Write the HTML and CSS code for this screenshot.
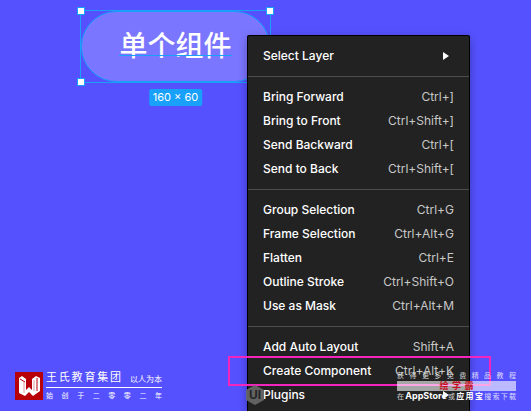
FILE: index.html
```html
<!DOCTYPE html>
<html lang="zh-CN">
<head>
    <meta charset="UTF-8">
    <meta name="viewport" content="width=device-width, initial-scale=1.0">
    <title>Create Component</title>
    <link rel="stylesheet" href="styles.css">
</head>
<body>
    <main class="canvas">
        <div class="selection">
            <div class="pill"><span class="pill-text">单个组件</span></div>
            <i class="handle top-left"></i>
            <i class="handle top-right"></i>
            <i class="handle bottom-left"></i>
            <span class="size-badge">160 × 60</span>
        </div>

        <nav class="menu" lang="en">
            <ul class="menu-group">
                <li><button type="button">Select Layer <svg class="arrow" viewBox="0 0 6 8"><path d="M0 0L6 4L0 8Z"/></svg></button></li>
            </ul>
            <ul class="menu-group">
                <li><button type="button">Bring Forward <kbd>Ctrl+]</kbd></button></li>
                <li><button type="button">Bring to Front <kbd>Ctrl+Shift+]</kbd></button></li>
                <li><button type="button">Send Backward <kbd>Ctrl+[</kbd></button></li>
                <li><button type="button">Send to Back <kbd>Ctrl+Shift+[</kbd></button></li>
            </ul>
            <ul class="menu-group">
                <li><button type="button">Group Selection <kbd>Ctrl+G</kbd></button></li>
                <li><button type="button">Frame Selection <kbd>Ctrl+Alt+G</kbd></button></li>
                <li><button type="button">Flatten <kbd>Ctrl+E</kbd></button></li>
                <li><button type="button">Outline Stroke <kbd>Ctrl+Shift+O</kbd></button></li>
                <li><button type="button">Use as Mask <kbd>Ctrl+Alt+M</kbd></button></li>
            </ul>
            <ul class="menu-group">
                <li><button type="button">Add Auto Layout <kbd>Shift+A</kbd></button></li>
                <li class="marked"><button type="button">Create Component <kbd>Ctrl+Alt+K</kbd></button></li>
                <li><button type="button">Plugins <svg class="arrow" viewBox="0 0 6 8"><path d="M0 0L6 4L0 8Z"/></svg></button></li>
            </ul>
        </nav>

        <svg class="hex" viewBox="0 0 20 20">
            <path d="M10 0L19 5V15L10 20L1 15V5Z" fill="#6a6a6a"/>
            <text x="10" y="14" text-anchor="middle">UI</text>
        </svg>

        <div class="brand">
            <svg class="brand-logo" viewBox="0 0 28 28">
                <rect width="28" height="28" fill="#b80009"/>
                <path d="M4 6L7 4L11 7V18L14 15L17 18V7L21 4L25 6V19L18 24L14 20L10 24L4 21Z" fill="#fff"/>
                <path d="M5 7L10 10M22 6V19" fill="none" stroke="#b80009" stroke-width="1"/>
                <path d="M9 10V21M19 8V19" fill="none" stroke="#e09a9d" stroke-width="1"/>
            </svg>
            <div class="brand-text">
                <div class="brand-top">
                    <span class="brand-name">王氏教育集团</span>
                    <span class="brand-motto">以人为本</span>
                </div>
                <div class="brand-since">始创于二零零二年</div>
            </div>
        </div>

        <div class="promo">
            <div class="promo-line">获得更多免费精品教程</div>
            <div class="promo-bar"><span>绘学霸</span></div>
            <div class="promo-line promo-stores">在<b class="app-store">AppStore</b>或<b>应用宝</b>搜索下载</div>
        </div>
    </main>
</body>
</html>
```

FILE: styles.css
```css
* {
    box-sizing: border-box;
}

body {
    margin: 0;
    font-family: Inter, "Noto Sans CJK SC", sans-serif;
    color: #fff;
    background-color: #5551ff;
}

.canvas {
    position: relative;
    height: 100vh;
    overflow: hidden;
}

/* selected layer */
.selection {
    position: absolute;
    left: 80px;
    top: 10px;
    width: 191px;
    height: 73px;
    border: 1px solid #18a0fb;
}

.pill {
    display: flex;
    align-items: center;
    justify-content: center;
    height: 100%;
    border: 1px solid #18a0fb;
    border-radius: 36px;
    background-color: #7b76ff;
}

.pill-text {
    position: relative;
    height: 32px;
    font-size: 28px;
    line-height: 30px;
    font-weight: 500;
}

.pill-text::after {
    content: "";
    position: absolute;
    left: 0;
    right: 0;
    bottom: 7px;
    height: 1px;
    background-color: #18a0fb;
}

.handle {
    position: absolute;
    width: 8px;
    height: 8px;
    border: 1px solid #18a0fb;
    background-color: #fff;
}

.top-left {
    left: -4px;
    top: -4px;
}

.top-right {
    right: -4px;
    top: -4px;
}

.bottom-left {
    left: -4px;
    bottom: -4px;
}

.size-badge {
    position: absolute;
    left: 50%;
    top: 78px;
    transform: translateX(-50%);
    padding: 0 4px;
    border-radius: 2px;
    font-size: 11px;
    line-height: 17px;
    white-space: nowrap;
    background-color: #18a0fb;
}

/* context menu */
.menu {
    position: absolute;
    left: 247px;
    top: 36px;
    width: 223px;
    border: solid #000;
    border-width: 0 1px;
    border-radius: 2px;
    background-color: #222;
    box-shadow: 0 -1px 0 #000, 0 2px 10px rgba(0, 0, 0, 0.3);
}

.menu-group {
    margin: 0;
    padding: 8px 0;
    list-style: none;
}

.menu-group + .menu-group {
    border-top: 1px solid #4d4d4d;
}

.menu button {
    display: flex;
    align-items: center;
    justify-content: space-between;
    width: 100%;
    height: 24px;
    padding: 0 15px;
    border: 0;
    font: 500 12px/24px Inter, sans-serif;
    color: #fff;
    background: none;
}

.menu kbd {
    font: inherit;
    font-weight: 400;
    color: #c8c8c8;
}

.arrow {
    width: 6px;
    height: 8px;
    margin-right: 5px;
    fill: #fff;
}

.marked {
    position: relative;
}

.marked::after {
    content: "";
    position: absolute;
    inset: -3px -22px -3px -20px;
    border: 2px solid #f425bd;
    pointer-events: none;
}

/* watermarks */
.hex {
    position: absolute;
    left: 245px;
    bottom: 6px;
    width: 20px;
    height: 20px;
    opacity: 0.9;
}

.hex text {
    font: 700 12px Inter, sans-serif;
    fill: #262626;
}

.brand {
    position: absolute;
    left: 15px;
    bottom: 7px;
    display: flex;
    gap: 3px;
}

.brand-logo {
    width: 28px;
    height: 28px;
}

.brand-text {
    width: 116px;
}

.brand-top {
    display: flex;
    align-items: flex-end;
    justify-content: space-between;
    height: 16px;
    border-bottom: 1px solid #fff;
    line-height: 12px;
    padding-bottom: 4px;
}

.brand-name {
    width: 75px;
    font-size: 11px;
    text-align-last: justify;
}

.brand-motto {
    font-size: 8px;
    line-height: 8px;
}

.brand-since {
    font-size: 7px;
    line-height: 16px;
    text-align-last: justify;
}

.promo {
    position: absolute;
    right: 15px;
    bottom: 10px;
    width: 119px;
    font-size: 7px;
    line-height: 10px;
    color: rgba(255, 255, 255, 0.8);
}

.promo-line {
    height: 10px;
    white-space: nowrap;
    text-align-last: justify;
}

.promo-bar {
    display: flex;
    justify-content: center;
    height: 10px;
    font-size: 9px;
    font-weight: 700;
    color: #c4101c;
    background-color: rgba(255, 255, 255, 0.6);
}

.promo-bar span {
    width: 34px;
    text-align-last: justify;
}

.promo-stores b {
    font-size: 8px;
    color: #fff;
}

.promo-stores .app-store {
    font-size: 9px;
}
```
